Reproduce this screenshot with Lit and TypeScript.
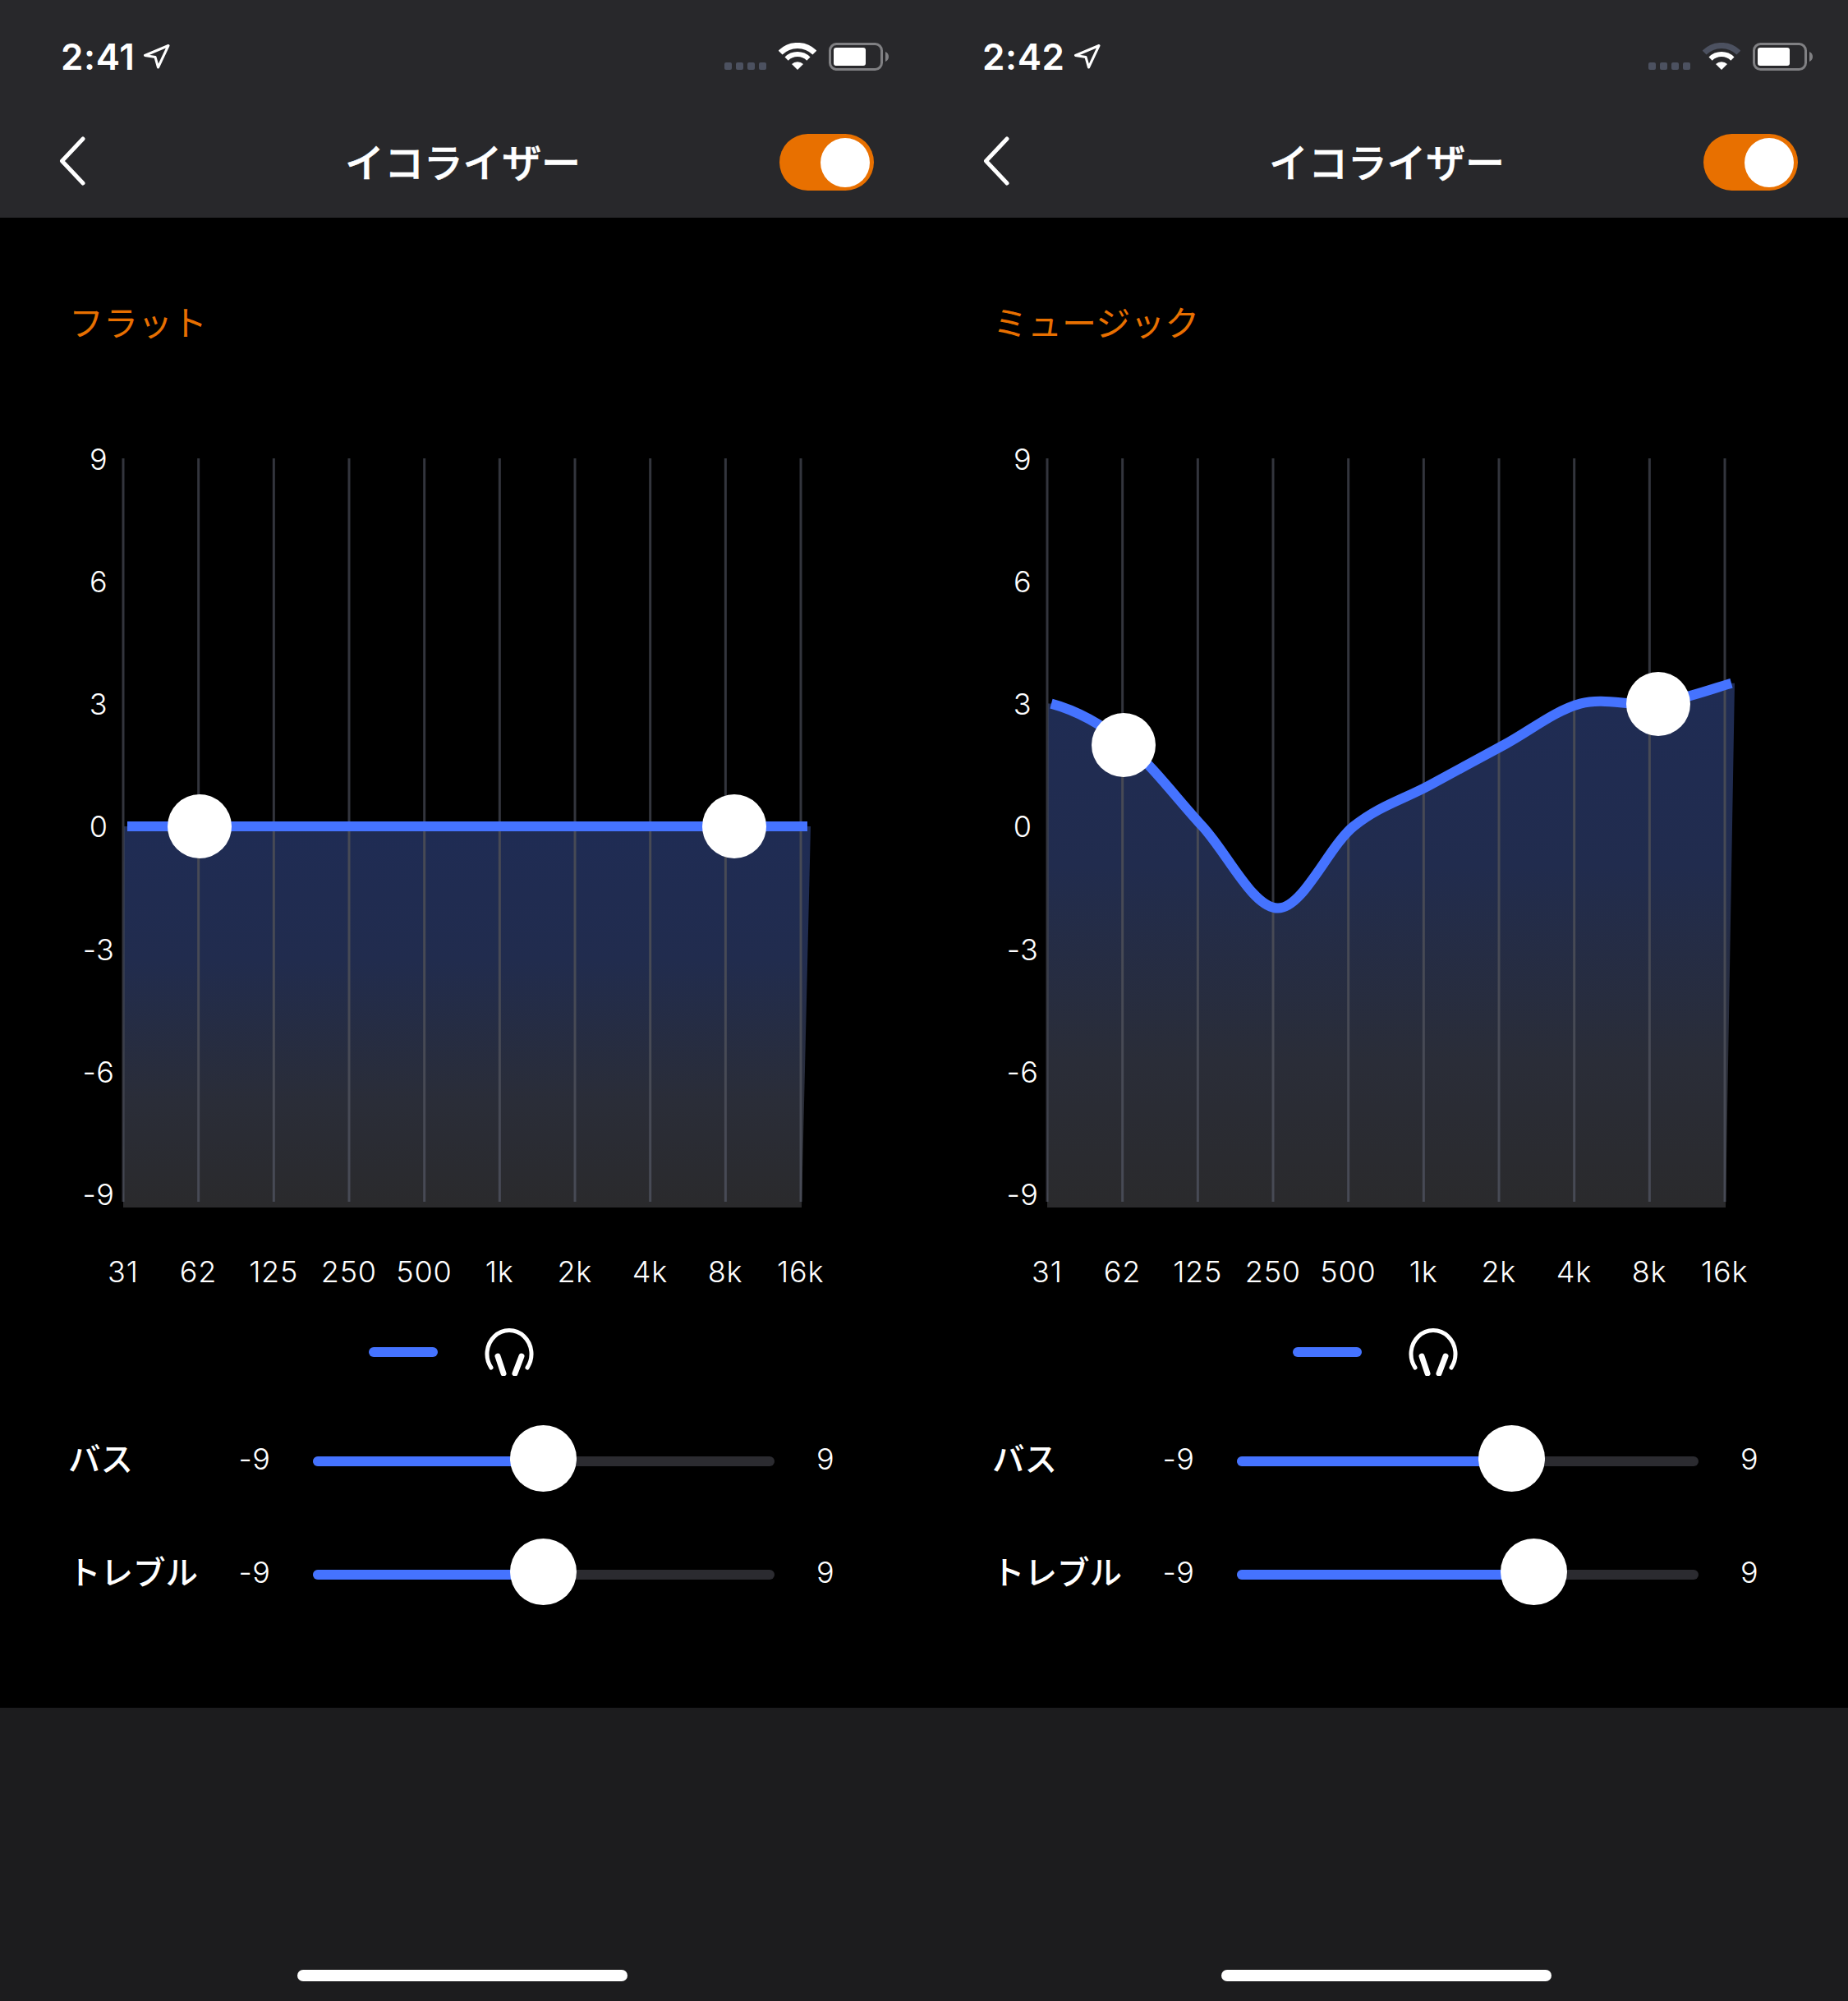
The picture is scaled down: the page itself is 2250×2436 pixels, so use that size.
import { LitElement, html, css, svg } from "lit";
import { customElement } from "lit/decorators.js";

const LINE_X = Array.from({ length: 10 }, (_, i) => 150 + (91.67 * i));
const FREQS = ["31", "62", "125", "250", "500", "1k", "2k", "4k", "8k", "16k"];
const Y_LABELS = ["9", "6", "3", "0", "-3", "-6", "-9"];
const yOf = (v: number) => 1006 - 49.8 * v;

function curvePath(gains: number[]) {
  const p = gains.map((g, i) => [155 + 92 * i, yOf(g)]);
  let d = `M${p[0][0]} ${p[0][1]}`;
  for (let i = 0; i < p.length - 1; i++) {
    const b = p[i], c = p[i + 1];
    const a = i === 0 ? [b[0] - 92, b[1]] : p[i - 1];
    const e = p[Math.min(i + 2, p.length - 1)];
    const k = 1 / 6;
    d += ` C${(b[0] + (c[0] - a[0]) * k).toFixed(1)} ${(b[1] + (c[1] - a[1]) * k).toFixed(1)} ${(c[0] - (e[0] - b[0]) * k).toFixed(1)} ${(c[1] - (e[1] - b[1]) * k).toFixed(1)} ${c[0]} ${c[1]}`;
  }
  return d;
}

interface Panel {
  id: string; time: string; preset: string; gains: number[]; handles: number[][];
  bass: number; treble: number; timePad: number; wifiOuter: string;
}

const PANELS: Panel[] = [
  { id: "a", time: "2:41", preset: "フラット", gains: [0, 0, 0, 0, 0, 0, 0, 0, 0, 0], handles: [[243, 1006], [894, 1006]], bass: 0.499, treble: 0.499, timePad: 74, wifiOuter: "#fff" },
  { id: "b", time: "2:42", preset: "ミュージック", gains: [3, 2, 0, -2, 0, 1, 2, 3, 3, 3.5], handles: [[243, 907], [894, 857]], bass: 0.596, treble: 0.643, timePad: 71, wifiOuter: "#4c5160" },
];

@customElement("app-root")
export class AppRoot extends LitElement {
  static styles = css`
    :host { display: grid; grid-template-columns: 1125px 1125px; width: 2250px; height: 2436px; background: #000; font-family: Inter, "Noto Sans CJK JP", sans-serif; font-weight: 300; color: #fff; }
    .panel { display: flex; flex-direction: column; height: 2436px; }
    .top { background: #28282b; height: 265px; display: flex; flex-direction: column; }
    .status { display: flex; align-items: flex-start; height: 34px; margin-top: 52px; padding-right: 43px; }
    .time { font: 600 44px/34px Inter, sans-serif; letter-spacing: 0.6px; }
    .loc { margin-left: 11px; margin-top: 2px; }
    .status-right { margin-left: auto; display: flex; align-items: flex-end; gap: 15px; height: 34px; }
    .signal { display: flex; gap: 5px; margin-bottom: 1px; }
    .signal i { width: 9px; height: 9px; border-radius: 2px; background: #4c5160; display: block; }
    .nav { display: grid; grid-template-columns: 1fr auto 1fr; align-items: center; margin-top: 76px; height: 70px; padding: 0 61px 0 72px; }
    .back { display: block; margin-top: -2px; }
    .title { font: 500 48px/70px "Noto Sans CJK JP", sans-serif; -webkit-text-stroke: 0.6px #fff; letter-spacing: -0.2px; margin-top: -5px; margin-left: -9px; }
    .toggle { justify-self: end; width: 115px; height: 69px; border-radius: 35px; background: #e87000; display: flex; align-items: center; justify-content: flex-end; padding-right: 5px; box-sizing: border-box; margin-top: 1px; }
    .toggle i { display: block; width: 60px; height: 60px; border-radius: 50%; background: #fff; }
    .main { background: #000; height: 1814px; display: flex; flex-direction: column; }
    .preset { font: 400 42px/60px "Noto Sans CJK JP", sans-serif; color: #e87000; margin-top: 96px; margin-bottom: 2px; padding-left: 84px; }
    .chart { display: flex; margin-top: 115px; height: 936px; padding-left: 100px; }
    .yaxis { width: 40px; display: flex; flex-direction: column; justify-content: space-between; align-items: center; font-size: 36px; line-height: 40px; letter-spacing: 0.5px; }
    .yaxis span { position: relative; top: 0.5px; }
    .plot { display: block; }
    .xaxis { display: grid; grid-template-columns: repeat(10, 91.67px); margin-top: 54px; padding-left: 104px; font-size: 36px; line-height: 40px; letter-spacing: 0.8px; text-align: center; }
    .legend { display: flex; align-items: center; margin-top: 49px; padding-left: 449px; gap: 57px; height: 58px; }
    .pill { width: 84px; height: 12px; border-radius: 6px; background: #4573ff; }
    .sliders { display: flex; flex-direction: column; gap: 98px; margin-top: 81px; padding-left: 85px; }
    .row { display: grid; grid-template-columns: 190px 70px 634px 52px; align-items: center; height: 40px; font-size: 36px; line-height: 40px; }
    .row .name { font: 500 39.5px/40px "Noto Sans CJK JP", sans-serif; margin-left: -2px; margin-top: -4px; }
    .row .lim { text-align: center; letter-spacing: 0.5px; }
    .track { position: relative; height: 12px; border-radius: 6px; background: #2b2b30; margin: 6px 36px 0; }
    .fill { height: 12px; border-radius: 6px; background: #4573ff; }
    .thumb { position: absolute; top: -38.5px; width: 81px; height: 81px; margin-left: -40.5px; border-radius: 50%; background: #fff; }
    .bottom { flex: 1; background: #1c1c1e; display: flex; justify-content: center; align-items: flex-end; padding-bottom: 24px; }
    .home { width: 402px; height: 14px; border-radius: 7px; background: #fff; }
  `;

  private plot(p: Panel) {
    const curve = curvePath(p.gains);
    const first = yOf(p.gains[0]);
    const last = yOf(p.gains[p.gains.length - 1]);
    const area = `M151 ${first} L155 ${first}` + curve.replace(/^M[^C]*/, " ") + ` L987 ${last} L976 1470 L150 1470 Z`;
    const lines = (stroke: string) => LINE_X.map((x) => svg`<line x1=${x} x2=${x} y1="558" y2="1463" stroke=${stroke} stroke-width="3"></line>`);
    return html`<svg class="plot" width="860" height="936" viewBox="140 538 860 936">
      <defs>
        <linearGradient id="g${p.id}" x1="0" y1="0" x2="0" y2="1">
          <stop offset="0" stop-color="#1f2c54"></stop>
          <stop offset="0.35" stop-color="#212c4e"></stop>
          <stop offset="0.72" stop-color="#2a2d38"></stop>
          <stop offset="1" stop-color="#2a2a2c"></stop>
        </linearGradient>
        <clipPath id="c${p.id}"><path d=${area}></path></clipPath>
      </defs>
      ${lines("#33353d")}
      <path d=${area} fill="url(#g${p.id})"></path>
      <g clip-path="url(#c${p.id})">${lines("#474a55")}</g>
      <path d=${curve} fill="none" stroke="#4573ff" stroke-width="12"></path>
      ${p.handles.map(([x, y]) => svg`<circle cx=${x} cy=${y} r="39" fill="#fff"></circle>`)}
    </svg>`;
  }

  private slider(name: string, v: number) {
    const pct = `${v * 100}%`;
    return html`<div class="row">
      <div class="name">${name}</div>
      <div class="lim">-9</div>
      <div class="track"><div class="fill" style="width:${pct}"></div><div class="thumb" style="left:${pct}"></div></div>
      <div class="lim">9</div>
    </div>`;
  }

  private panel(p: Panel) {
    return html`<section class="panel">
      <header class="top">
        <div class="status" style="padding-left:${p.timePad}px">
          <span class="time">${p.time}</span>
          <svg class="loc" width="32" height="30" viewBox="0 0 32 30"><path d="M30 1.5 L1.5 13.5 L14 15.5 L17.5 28 Z" fill="none" stroke="#fff" stroke-width="3" stroke-linejoin="round"></path></svg>
          <div class="status-right">
            <div class="signal"><i></i><i></i><i></i><i></i></div>
            <svg width="46" height="34" viewBox="0 0 46 34">
              <path d="M2.1 12.1 A29.5 29.5 0 0 1 43.9 12.1" fill="none" stroke=${p.wifiOuter} stroke-width="7"></path>
              <path d="M9.6 19.6 A19 19 0 0 1 36.4 19.6" fill="none" stroke="#fff" stroke-width="6"></path>
              <path d="M23 33 L16 26 A10 10 0 0 1 30 26 Z" fill="#fff"></path>
            </svg>
            <svg width="73" height="34" viewBox="0 0 73 34">
              <rect x="1.5" y="1.5" width="63" height="31" rx="8" fill="none" stroke="#808083" stroke-width="3"></rect>
              <rect x="6" y="6" width="39" height="22" rx="3" fill="#fff"></rect>
              <path d="M69 11 C71.5 12 73 14 73 17 C73 20 71.5 22 69 23 Z" fill="#808083"></path>
            </svg>
          </div>
        </div>
        <div class="nav">
          <svg class="back" width="34" height="60" viewBox="0 0 34 60"><path d="M29 3 L3.5 30 L29 57" fill="none" stroke="#fff" stroke-width="5" stroke-linecap="round" stroke-linejoin="round"></path></svg>
          <div class="title">イコライザー</div>
          <div class="toggle"><i></i></div>
        </div>
      </header>
      <main class="main">
        <div class="preset">${p.preset}</div>
        <div class="chart">
          <div class="yaxis">${Y_LABELS.map((l) => html`<span>${l}</span>`)}</div>
          ${this.plot(p)}
        </div>
        <div class="xaxis">${FREQS.map((f) => html`<span>${f}</span>`)}</div>
        <div class="legend">
          <div class="pill"></div>
          <svg width="60" height="58" viewBox="0 0 60 58"><path d="M8 48 A27 28.8 0 1 1 52 48" fill="none" stroke="#fff" stroke-width="5" stroke-linecap="round"></path><path d="M16 34 L23 55 M45 34 L37 55" fill="none" stroke="#fff" stroke-width="7" stroke-linecap="round"></path></svg>
        </div>
        <div class="sliders">
          ${this.slider("バス", p.bass)}
          ${this.slider("トレブル", p.treble)}
        </div>
      </main>
      <footer class="bottom"><div class="home"></div></footer>
    </section>`;
  }

  render() {
    return PANELS.map((p) => this.panel(p));
  }
}
